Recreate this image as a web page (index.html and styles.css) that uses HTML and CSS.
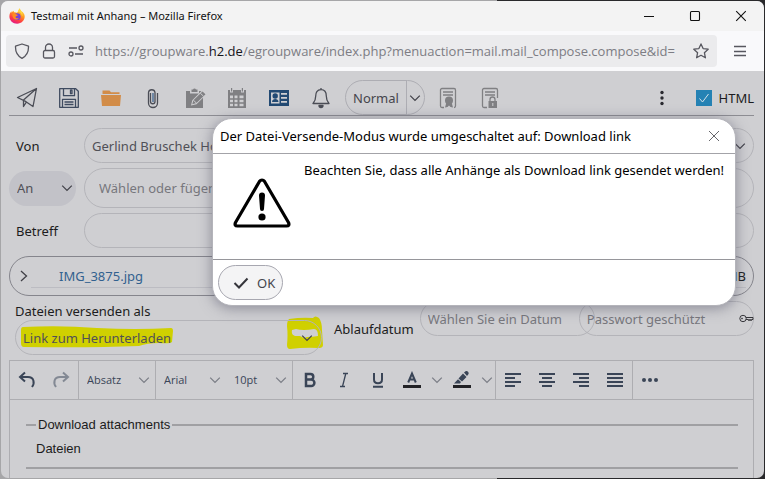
FILE: index.html
```html
<!DOCTYPE html>
<html lang="de">
<head>
<meta charset="utf-8">
<meta name="viewport" content="width=device-width, initial-scale=1">
<title>Testmail mit Anhang – Mozilla Firefox</title>
<link rel="stylesheet" href="styles.css">
</head>
<body>
<svg class="defs" aria-hidden="true">
  <symbol id="chev" viewBox="0 0 10 10"><path d="M1 3l4 4 4-4" fill="none" stroke="currentColor" stroke-width="1.100"/></symbol>
</svg>
<div class="window">
  <header class="titlebar">
    <svg class="logo" viewBox="0 0 16 16" aria-hidden="true">
      <defs>
        <linearGradient id="fx" x1="0.8" y1="0" x2="0.3" y2="1"><stop offset="0" stop-color="#ffe14a"/><stop offset=".4" stop-color="#ff9a1f"/><stop offset=".7" stop-color="#ff4340"/><stop offset="1" stop-color="#e31587"/></linearGradient>
      </defs>
      <path d="M10 .3c1.700 1.200 2 2.300 2.300 2.900C14.800 4.500 15.700 6.500 15.700 8.600c0 4-3.400 7.100-7.600 7.100S.4 12.600.4 8.500c0-2.500.9-4.300 2-5.300l.3 1.500c.5-1 1.100-1.500 1.900-2l.3 1.600c1.300-.2 2 .1 3 .5C9.500 3.600 10.400 2.200 10 .3z" fill="url(#fx)"/>
      <circle cx="8.200" cy="8.700" r="3.400" fill="#7543d9"/>
      <path d="M3.300 6.200c1.500-1 3.200-.6 4.400.4 1 .1 1.300.7.700 1.200-.8.600-1.700.5-1.900 1.200.2 1.300 2 1.700 3.300 1-1 2.200-4.600 2-5.700-.3-.5-1.200-.8-2.300-.8-3.500z" fill="#ff8b22"/>
      <path d="M8.500 3.200c2.800.6 4.800 2.500 4.500 5.300 1-1.800.6-4-.7-5.300L10 .3c.2 1.200-.5 2-1.500 2.900z" fill="#ffd83f"/>
    </svg>
    <h1 class="title">Testmail mit Anhang – Mozilla Firefox</h1>
    <div class="wincontrols">
      <button aria-label="Minimieren"><svg viewBox="0 0 12 12"><path d="M1 6.500h10"/></svg></button>
      <button aria-label="Maximieren"><svg viewBox="0 0 12 12"><rect x="1.500" y="1.500" width="9" height="9" rx="1"/></svg></button>
      <button aria-label="Schließen"><svg viewBox="0 0 12 12"><path d="M1.200 1.200l9.600 9.600M10.800 1.200l-9.600 9.600"/></svg></button>
    </div>
  </header>
  <nav class="navbar">
    <div class="urlbar">
      <svg class="ui" viewBox="0 0 16 16"><path d="M8 1L14.500 3.200C14.700 8.500 13 12.700 8 15.300 3 12.700 1.300 8.500 1.500 3.200z"/></svg>
      <svg class="ui" viewBox="0 0 16 16"><rect x="2.500" y="7.500" width="11" height="7.500" rx="1.500"/><path d="M4.500 7.500V4.500a3.500 3.500 0 0 1 7 0v3"/></svg>
      <svg class="ui" viewBox="0 0 16 16"><circle cx="13" cy="5" r="2"/><path d="M1 5h8M7 11h8"/><circle cx="3" cy="11" r="2"/></svg>
      <span class="url">https://groupware.<b>h2.de</b>/egroupware/index.php?menuaction=mail.mail_compose.compose&amp;id=</span>
      <svg class="ui" viewBox="0 0 16 16"><path d="M8 .9l2.100 4.700 5.100.6-3.800 3.500 1 5.100L8 12.300l-4.400 2.500 1-5.100L.8 6.200l5.100-.6z"/></svg>
    </div>
    <button class="menu" aria-label="Menü"><svg class="ui" viewBox="0 0 16 16"><path d="M2 3.500h12M2 8.500h12M2 12.500h12"/></svg></button>
  </nav>
  <main class="page">
    <div class="tools">
      <div class="toolset">
        <button aria-label="Senden"><svg viewBox="0 0 22 22"><path d="M1.500 10.500L20.500 1.500 17 19.500l-7-4.800zM20.500 1.500L7.500 13v6.500l3-4.600"/></svg></button>
        <button aria-label="Speichern"><svg class="navy" viewBox="0 0 22 22"><path d="M1.700 1.700h16l2.600 2.600v16H1.700zM5.500 1.700v7h11v-7M12.500 3.200v3.500h1.500V3.200zM4.500 20.300v-8h13v8M6.500 15h9M6.500 17.500h9"/></svg></button>
        <button aria-label="Öffnen"><svg class="orange" viewBox="0 0 22 22"><path d="M2.500 7V3.500h7l1.500 1.700h8.500V7zM1 8h20l-1 11H2z"/></svg></button>
        <button aria-label="Anhang"><svg viewBox="0 0 22 22"><path d="M8.500 6v8.500a2 2 0 0 0 4.500 0V5.500a3.300 3.300 0 0 0-6.500 0V16a4.500 4.500 0 0 0 9 0V6"/><path class="blue" d="M11 6v9"/></svg></button>
        <button aria-label="Notiz"><svg class="gray" viewBox="0 0 22 22"><path fill-rule="evenodd" d="M2 4h4v2.500h9V4h2.500L8.300 13.200 7 18.500l5.500-1.300 6.500-6.400V21H2zM7.500 5V2.500H9a1.600 1.600 0 0 1 3 0h1.500V5zM18.500 4.500L21.500 7.200 12.500 16l-4.200 1.200 1.100-4z"/><path class="cut" d="M16.300 6.200l3.200 3M9.500 13.200l2.800 2.800"/></svg></button>
        <button aria-label="Kalender"><svg class="gray" viewBox="0 0 22 22"><path fill-rule="evenodd" d="M2 3h2v2.500h3V3h8v2.500h3V3h2v18H2zM4 8.500v2.700h3V8.500zM8.500 8.500v2.700h3V8.500zM13.500 8.500v2.700h4V8.500zM4 12.700v2.600h3v-2.600zM8.500 12.700v2.600h3v-2.600zM13.500 12.700v2.600h4v-2.600zM4 16.800v2.500h3v-2.500zM8.500 16.800v2.500h3v-2.500zM13.500 16.800v2.500h4v-2.500zM5 1h1.200v3.500H5zM15.800 1H17v3.500h-1.200z"/></svg></button>
        <button aria-label="Kontakt"><svg class="card" viewBox="0 0 22 22"><path fill-rule="evenodd" d="M1 3h20v16H1zM3 5.500v11h8.500v-11zM13 6v1.800h6V6zM13 10v1.800h6V10zM13 14v1.800h6V14z"/><circle cx="7.200" cy="9" r="2.700"/><path d="M4 15c0-4 6.500-4 6.500 0z"/></svg></button>
        <button aria-label="Erinnerung"><svg viewBox="0 0 22 22"><path d="M11 2.700c-4 0-5.300 3-5.300 6.300 0 4.500-1 5.500-2.700 7.500h16c-1.700-2-2.700-3-2.700-7.500 0-3.300-1.300-6.300-5.300-6.300zM11 2.700V1"/><path d="M9 18.500h4a2 2 0 0 1-4 0z" fill="currentColor"/></svg></button>
      </div>
      <div class="priority">
        <select aria-label="Priorität"><option>Normal</option></select>
        <svg class="chev"><use href="#chev"/></svg>
      </div>
      <div class="toolset">
        <button aria-label="Signieren"><svg class="outline" viewBox="0 0 22 22"><path d="M7 20.500H5A1.500 1.500 0 0 1 3.500 19V3A1.500 1.500 0 0 1 5 1.500h12A1.500 1.500 0 0 1 18.500 3v16a1.500 1.500 0 0 1-1.500 1.500M6 5h10M6 8h10"/><circle cx="12" cy="13.500" r="4" class="solid"/><path class="solid" d="M9.500 15L8 20.500l2.500-.5L12 18.500l1.500 1.500 2.500.5-1.500-5.500z"/></svg></button>
        <button aria-label="Verschlüsseln"><svg class="outline" viewBox="0 0 22 22"><path d="M8 20.500H5A1.500 1.500 0 0 1 3.500 19V3A1.500 1.500 0 0 1 5 1.500h12A1.500 1.500 0 0 1 18.500 3v8M6 5h10M6 8h10M11 14v-1.500a2.500 2.500 0 0 1 5 0V14"/><path fill-rule="evenodd" class="solid" d="M9.500 14h8.500v7H9.500zM13.300 16v3h1v-3z"/></svg></button>
      </div>
      <button class="more" aria-label="Mehr"><svg viewBox="0 0 16 16"><circle cx="8" cy="2.500" r="1.700"/><circle cx="8" cy="8" r="1.700"/><circle cx="8" cy="13.500" r="1.700"/></svg></button>
      <label class="check"><input type="checkbox" checked><svg viewBox="0 0 16 16"><path d="M3.500 8.500l3 3.500 6-8"/></svg><span>HTML</span></label>
    </div>

    <div class="form">
      <label for="von">Von</label>
      <div class="pick">
        <select id="von" class="field"><option>Gerlind Bruschek Hochschule</option></select>
        <svg class="chev"><use href="#chev"/></svg>
      </div>
      <div class="pick kind">
        <select aria-label="Empfängertyp"><option>An</option></select>
        <svg class="chev"><use href="#chev"/></svg>
      </div>
      <input class="field to" type="text" aria-label="Empfänger" placeholder="Wählen oder fügen Sie Empfänger hinzu">
      <label for="betreff">Betreff</label>
      <input id="betreff" class="field" type="text">
    </div>

    <section class="attachments">
      <button class="expand" aria-label="Ausklappen"><svg viewBox="0 0 10 12"><path d="M2 1l5.500 5L2 11"/></svg></button>
      <div class="file"><a href="#">IMG_3875.jpg</a><span>1,2 MB</span></div>
    </section>

    <div class="sharing">
      <div class="mode">
        <label for="mode">Dateien versenden als</label>
        <div class="pick">
          <svg class="marker" viewBox="0 0 152 22" preserveAspectRatio="none"><path d="M2 1Q40-1 76 2 115 4 150 2q2 0 2 3l-1 11q-2 2-13 1-12 0-20 3-50 2-115 1-3 0-3-4L0 4q0-3 2-3z"/></svg>
          <svg class="marker end" viewBox="0 0 36 34"><path fill-rule="evenodd" d="M2 3Q15 1 26 2q2-3 6 0 3 4 3 12l1 15q0 3-4 3-14-1-29 1-3 0-3-4 1-10 0-19Q0 5 2 3zM5 14q-1 5 3 6h5q4 3 7 1 6 0 11-1 0-7-4-7Q16 15 9 13z"/></svg>
          <select id="mode" class="field"><option>Link zum Herunterladen</option></select>
          <svg class="chev"><use href="#chev"/></svg>
        </div>
      </div>
      <label class="expiry" for="ablauf">Ablaufdatum</label>
      <div class="protect">
        <div class="pick date"><input id="ablauf" class="field" type="text" placeholder="Wählen Sie ein Datum"></div>
        <div class="pick password">
          <input class="field" type="text" aria-label="Passwort" placeholder="Passwort geschützt">
          <svg class="key" viewBox="0 0 15 9"><circle cx="4" cy="4.500" r="3.200"/><path d="M7 3.500h7v2h-1.500v1h-1v-1h-1v1h-1v-1H7"/><circle cx="3" cy="4.500" r=".5"/></svg>
        </div>
      </div>
    </div>

    <section class="editor">
      <div class="edbar">
        <div class="group">
          <button aria-label="Rückgängig"><svg viewBox="0 0 18 18"><path d="M7 1.500L2 6l5 4.500M2 6h8c6 0 7 6 4 10"/></svg></button>
          <button class="dim" aria-label="Wiederholen"><svg viewBox="0 0 18 18"><path d="M11 1.500L16 6l-5 4.500M16 6H8C2 6 1 12 4 16"/></svg></button>
        </div>
        <div class="group drop block">
          <select aria-label="Absatzformat"><option>Absatz</option></select><svg class="chev"><use href="#chev"/></svg>
        </div>
        <div class="group fonts">
          <div class="drop family"><select aria-label="Schriftart"><option>Arial</option></select><svg class="chev"><use href="#chev"/></svg></div>
          <div class="drop size"><select aria-label="Schriftgröße"><option>10pt</option></select><svg class="chev"><use href="#chev"/></svg></div>
        </div>
        <div class="group">
          <button aria-label="Fett"><svg viewBox="0 0 18 18"><path class="heavy" d="M5 3h4.500a2.800 2.800 0 0 1 0 5.600H5zM5 8.600h5.200a3 3 0 0 1 0 6.400H5z"/></svg></button>
          <button aria-label="Kursiv"><svg viewBox="0 0 18 18"><path class="thin" d="M8 2.500h5M5 15.500h5M10.800 2.500l-3.300 13"/></svg></button>
          <button aria-label="Unterstrichen"><svg viewBox="0 0 18 18"><path d="M5 2v6.500c0 5 8 5 8 0V2M4 15.700h10"/></svg></button>
          <button aria-label="Textfarbe"><svg viewBox="0 0 18 18"><path d="M5.200 11.500L9 2.500l3.800 9M6.500 8.500h5"/><path class="bar" d="M0 14h18v3H0z"/></svg></button>
          <button class="arrow" aria-label="Textfarbe wählen"><svg class="chev"><use href="#chev"/></svg></button>
          <button aria-label="Hintergrundfarbe"><svg viewBox="0 0 18 18"><path class="fill" d="M11 1.500l1.500-1.200q1.500-.8 2.700.7 1 1.300 0 2.500L14 5zM10 2.500L13.500 6 9 10.500 5.500 7.500zM5 8.300L8 11l-1 1.500H1z"/><path class="bar" d="M0 14h18v3H0z"/></svg></button>
          <button class="arrow" aria-label="Hintergrundfarbe wählen"><svg class="chev"><use href="#chev"/></svg></button>
        </div>
        <div class="group">
          <button aria-label="Linksbündig"><svg viewBox="0 0 18 18"><path d="M1 3h16M1 7h10M1 11h16M1 15h10"/></svg></button>
          <button aria-label="Zentriert"><svg viewBox="0 0 18 18"><path d="M1 3h16M4 7h10M1 11h16M4 15h10"/></svg></button>
          <button aria-label="Rechtsbündig"><svg viewBox="0 0 18 18"><path d="M1 3h16M7 7h10M1 11h16M7 15h10"/></svg></button>
          <button aria-label="Blocksatz"><svg viewBox="0 0 18 18"><path d="M1 3h16M1 7h16M1 11h16M1 15h16"/></svg></button>
        </div>
        <div class="group last">
          <button aria-label="Weitere"><svg viewBox="0 0 18 18"><g class="fill"><circle cx="3" cy="9" r="2"/><circle cx="9" cy="9" r="2"/><circle cx="15" cy="9" r="2"/></g></svg></button>
        </div>
      </div>
      <div class="edbody">
        <fieldset>
          <legend>Download attachments</legend>
          <span>Dateien</span>
        </fieldset>
      </div>
    </section>
  </main>
</div>

<div class="dialog" role="dialog" aria-labelledby="dlgtitle">
  <header>
    <h2 id="dlgtitle">Der Datei-Versende-Modus wurde umgeschaltet auf: Download link</h2>
    <button class="close" aria-label="Schließen"><svg viewBox="0 0 12 12"><path d="M1 1l10 10M11 1L1 11"/></svg></button>
  </header>
  <div class="message">
    <svg viewBox="0 0 58 50" aria-hidden="true"><path d="M26.600 3.200a3 3 0 0 1 4.800 0L55.500 44.500q1.500 3.500-2 3.500h-49q-3.500 0-2-3.500z" fill="none" stroke="#000" stroke-width="3.200" stroke-linejoin="round"/><path d="M26 17.500a3 3 0 0 1 6 0L31 31a2 2 0 0 1-4 0z"/><circle cx="29" cy="39" r="3.600"/></svg>
    <p>Beachten Sie, dass alle Anhänge als Download link gesendet werden!</p>
  </div>
  <footer>
    <button class="ok"><svg viewBox="0 0 16 12"><path d="M1.500 6l4.500 4.500 8.500-9"/></svg>OK</button>
  </footer>
</div>
</body>
</html>
```
FILE: styles.css
```css
* { box-sizing: border-box; }

body {
  margin: 0;
  min-height: 100vh;
  background: linear-gradient(to right, #a6a6a8 65%, #29292b 65%);
  color: #1c1c20;
  font: 13px/20px "Noto Sans", "Open Sans", sans-serif;
  overflow: hidden;
}

button, select, input {
  margin: 0;
  padding: 0;
  border: 0;
  background: none;
  color: inherit;
  font: inherit;
  appearance: none;
}

button { display: grid; place-items: center; }
svg { display: block; }
.defs { position: absolute; width: 0; height: 0; }
.chev { width: 12px; height: 12px; pointer-events: none; }

.window {
  display: flex;
  flex-direction: column;
  min-height: 100vh;
  border: 1px solid transparent;
  border-radius: 8px;
  background: #cfcfd2 padding-box;
  overflow: hidden;
}

.titlebar {
  display: flex;
  align-items: center;
  height: 30px;
  padding-left: 8px;
  background: #f3f3f3;
}
.logo { width: 16px; height: 16px; }
.title { flex: 1; margin: 0 6px; font-size: 11px; font-weight: 400; color: #111; }
.wincontrols { display: flex; }
.wincontrols button { width: 46px; height: 30px; }
.wincontrols svg { width: 12px; height: 12px; fill: none; stroke: #111; stroke-width: 1.100; }

.navbar {
  display: flex;
  align-items: center;
  height: 40px;
  padding: 0 16px 0 5px;
  gap: 15px;
  background: #f9f9fb;
}
.urlbar {
  display: flex;
  flex: 1;
  align-items: center;
  gap: 11px;
  min-width: 0;
  height: 32px;
  padding: 0 8px;
  border-radius: 4px;
  background: #ebebed;
}
.ui { flex: none; width: 16px; height: 16px; fill: none; stroke: #57575f; stroke-width: 1.300; stroke-linejoin: round; }
.url { flex: 1; white-space: nowrap; color: #7d7d84; font-family: "Open Sans", "Noto Sans", sans-serif; }
.url b { font-weight: 400; color: #15141a; }

.page { display: flex; flex: 1; flex-direction: column; padding: 0 10px 0 8px; }

.tools {
  display: flex;
  align-items: center;
  height: 45px;
  padding: 9px 0 0 7px;
  border-bottom: 1px solid #8d8d93;
}
.toolset { display: flex; gap: 20px; }
.toolset svg { width: 22px; height: 22px; fill: none; stroke: #4b4d56; stroke-width: 1.300; stroke-linejoin: round; color: #4b4d56; }
.toolset .navy { stroke: #3f4b60; }
.toolset .blue { stroke: #3e6490; }
.toolset .orange { fill: #d28c48; stroke: none; }
.toolset .gray { fill: #808083; stroke: none; }
.toolset .cut { stroke: #cfcfd2; stroke-width: 1; }
.toolset .card { fill: #234a73; stroke: none; }
.toolset .outline { stroke: #808083; }
.toolset .solid { fill: #808083; stroke: none; }

.priority {
  display: grid;
  align-items: center;
  width: 80px;
  height: 35px;
  margin: 0 12px 0 13px;
  border: 1px solid #adadb3;
  border-radius: 18px;
  color: #45454c;
}
.priority > * { grid-area: 1 / 1; }
.priority select { width: 61px; height: 33px; padding-left: 7px; border-right: 1px solid #adadb3; }
.priority .chev { justify-self: end; margin-right: 3px; }

.more { width: 16px; height: 20px; margin-left: auto; }
.more svg { width: 16px; height: 16px; fill: #2b2b31; }
.check { display: grid; grid-template-columns: 16px auto; align-items: center; column-gap: 7px; margin-left: 26px; }
.check input, .check svg { grid-area: 1 / 1; width: 16px; height: 16px; }
.check input { background: #2582b4; }
.check svg { fill: none; stroke: #d5e2ea; pointer-events: none; }

.field {
  width: 100%;
  height: 35px;
  padding: 0 14px 0 7px;
  border: 1px solid #b4b4b9;
  border-radius: 18px;
  color: #505057;
}
.field::placeholder { color: #77777d; opacity: 1; }

.form {
  display: grid;
  grid-template-columns: 67px 1fr;
  align-items: center;
  gap: 5px 8px;
  margin-top: 12px;
}
.form label { padding-left: 7px; }
.form .to { height: 40px; padding-left: 14px; border-radius: 20px; }
.pick { display: grid; align-items: center; min-width: 0; }
.pick > * { grid-area: 1 / 1; }
.pick > .chev { justify-self: end; margin-right: 8px; color: #45454c; }
.kind { height: 35px; border-radius: 18px; background: #c2c2c8; color: #505057; }
.kind select { height: 35px; padding-left: 8px; }
.kind > .chev { margin-right: 3px; }

.attachments {
  display: flex;
  align-items: center;
  height: 40px;
  margin-top: 8px;
  padding: 0 7px 0 9px;
  border: 1px solid #85858c;
  border-radius: 20px;
}
.expand svg { width: 10px; height: 12px; fill: none; stroke: #404047; stroke-width: 1.300; }
.file {
  display: flex;
  flex: 1;
  align-items: center;
  justify-content: space-between;
  height: 24px;
  margin-left: 2px;
  padding: 0 0 0 28px;
  border-bottom: 1px solid #bcbcc2;
}
.file a { color: #32618f; text-decoration: none; }

.sharing { display: flex; align-items: flex-start; gap: 12px; padding-left: 6px; margin-top: 5px; }
.mode { flex: 0 0 307px; }
.mode label { display: block; height: 19px; }
.marker { width: 152px; height: 22px; margin: 0 0 2px 6px; fill: #d0d000; }
.marker.end { justify-self: end; width: 36px; height: 34px; margin: -5px -1px 5px 0; }
.mode .chev { margin-right: 9px; }
.expiry { margin-top: 18px; }
.protect { display: grid; flex: 1; grid-template-columns: repeat(2, minmax(0, 1fr)); min-width: 0; margin-left: -6px; }
.date { margin-right: -8px; }
.password { margin-left: -8px; }
.key { justify-self: end; width: 15px; height: 9px; fill: none; stroke: #36363b; }

.editor { display: flex; flex: 1; flex-direction: column; margin-top: 5px; border: 1px solid #adadb1; border-bottom: 0; }
.edbar { display: flex; height: 39px; border-bottom: 1px solid #adadb1; color: #3a4557; font-family: "Open Sans", "Noto Sans", sans-serif; font-size: 11px; }
.group { display: flex; align-items: center; border-right: 1px solid #adadb1; }
.group.last { border: 0; }
.edbar button { width: 34px; height: 34px; }
.edbar button svg { width: 18px; height: 18px; fill: none; stroke: #3a4557; stroke-width: 2; }
.edbar .dim { opacity: .5; }
.edbar .heavy { stroke-width: 2.500; }
.edbar .thin { stroke-width: 1.300; }
.edbar .bar { fill: #222226; stroke: none; }
.edbar .fill { fill: #3a4557; stroke: none; }
.edbar .arrow { width: 16px; }
.edbar .chev, .edbar button .chev { width: 12px; height: 12px; color: #7c7f87; }
.drop { display: grid; align-items: center; }
.drop > * { grid-area: 1 / 1; }
.drop .chev { justify-self: end; margin-right: 5px; }
.drop select { width: 100%; height: 34px; padding-left: 8px; }
.block { width: 77px; }
.family { width: 70px; }
.size { width: 66px; }

.edbody { flex: 1; padding: 15px 15px 0 16px; font: 13px/20px "Liberation Sans", Arial, sans-serif; }
.edbody fieldset { min-width: 0; height: 54px; margin: 0; padding: 4px 10px; border: solid #a0a0a3; border-width: 2px 0; }
.edbody legend { padding: 0 2px; }

.dialog {
  position: absolute;
  top: 118px;
  right: 29px;
  left: 212px;
  border: 1px solid #b4b4ba;
  border-radius: 20px;
  background: #fff;
  box-shadow: 0 2px 14px rgba(80, 80, 100, .55);
  color: #000;
}
.dialog header { display: flex; align-items: center; justify-content: space-between; height: 35px; padding: 0 15px 0 7px; border-bottom: 1px solid #a3a3a8; }
.dialog h2 { margin: 0; font-size: 13px; font-weight: 400; }
.close svg { width: 12px; height: 12px; fill: none; stroke: #67676c; }
.message { display: flex; gap: 13px; height: 106px; padding: 6px 6px 0 20px; border-bottom: 1px solid #96969b; }
.message svg { flex: none; width: 58px; height: 50px; margin-top: 18px; }
.message p { margin: 0; white-space: nowrap; }
.dialog footer { padding: 5px; }
.ok {
  display: flex;
  align-items: center;
  gap: 8px;
  height: 35px;
  padding: 0 7px 0 14px;
  border: 1px solid #a7a7b0;
  border-radius: 18px;
  background: #f4f4f5;
  color: #45454c;
}
.ok svg { width: 16px; height: 12px; fill: none; stroke: #35353b; stroke-width: 2; }
```
